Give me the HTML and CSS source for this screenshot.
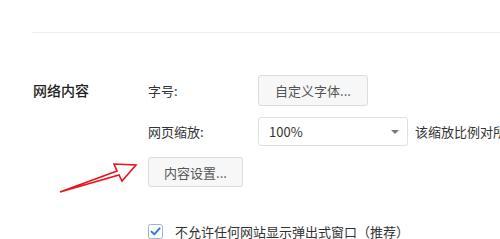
FILE: index.html
```html
<!DOCTYPE html>
<html lang="zh-CN">
<head>
    <meta charset="UTF-8">
    <title>设置</title>
    <link rel="stylesheet" href="styles.css">
</head>
<body>
    <div class="page">
        <div class="divider"></div>

        <!-- 网络内容 -->
        <div class="section">
            <div class="section-title">网络内容</div>
            <div class="settings">
                <div class="row">
                    <span class="row-label">字号:</span>
                    <button class="btn btn-font">自定义字体...</button>
                </div>
                <div class="row">
                    <span class="row-label">网页缩放:</span>
                    <div class="select">
                        <span>100%</span>
                        <span class="caret"></span>
                    </div>
                    <span class="hint">该缩放比例对所有网页生效</span>
                </div>
                <div class="row">
                    <button class="btn btn-content">内容设置...</button>
                </div>
                <label class="check-row">
                    <svg class="checkbox" width="15" height="15" viewBox="0 0 15 15">
                        <rect x="0.5" y="0.5" width="14" height="14" rx="2" fill="#fff" stroke="#9fb4cc"/>
                        <path d="M3.5 7.6 L6.3 10.3 L11.6 4.4" fill="none" stroke="#2f7bd8" stroke-width="2" stroke-linecap="round" stroke-linejoin="round"/>
                    </svg>
                    <span>不允许任何网站显示弹出式窗口（推荐）</span>
                </label>
            </div>
        </div>

        <svg class="arrow" width="90" height="40" viewBox="55 160 90 40">
            <polygon points="60,192 117,171 114,164 136,165 122,181 119,175" fill="none" stroke="#e8141c" stroke-width="1.6" stroke-linejoin="miter"/>
        </svg>
    </div>
</body>
</html>
```

FILE: styles.css
```css
body {
    margin: 0;
    background-color: #fff;
    font-family: "Noto Sans CJK SC", "Liberation Sans", sans-serif;
    font-size: 13px;
    color: #333;
    overflow: hidden;
}
.page {
    position: relative;
    padding: 32px 0 0 32px;
    height: 239px;
    box-sizing: border-box;
    overflow: hidden;
}
.divider {
    height: 1px;
    background-color: #efefef;
}
.section {
    display: flex;
    margin-top: 42px;
}
.section-title {
    flex-shrink: 0;
    width: 115px;
    padding-left: 1px;
    font-size: 14px;
    font-weight: 500;
    color: #222;
    line-height: 31px;
    white-space: nowrap;
}
.settings {
    display: flex;
    flex-direction: column;
    gap: 11px;
    min-width: 0;
}
.row {
    display: flex;
    align-items: center;
    white-space: nowrap;
    min-width: 0;
}
.row-label {
    flex-shrink: 0;
    width: 110px;
    color: #333;
}
.btn {
    flex-shrink: 0;
    height: 31px;
    padding: 0 14px;
    font-family: inherit;
    font-size: 13px;
    color: #555;
    background-color: #f7f7f7;
    border: 1px solid #dcdcdc;
    border-radius: 3px;
}
.btn-font {
    width: 110px;
}
.btn-content {
    width: 95px;
    height: 30px;
    padding: 0;
}
.select {
    flex-shrink: 0;
    display: flex;
    align-items: center;
    justify-content: space-between;
    width: 150px;
    height: 29px;
    padding: 0 8px 0 10px;
    box-sizing: border-box;
    border: 1px solid #e0e0e0;
    border-radius: 3px;
    background-color: #fff;
    color: #333;
}
.caret {
    width: 0;
    height: 0;
    border-left: 4px solid transparent;
    border-right: 4px solid transparent;
    border-top: 4px solid #777;
}
.hint {
    margin-left: 7px;
    min-width: 0;
    overflow: hidden;
    color: #333;
}
.check-row {
    display: flex;
    align-items: center;
    gap: 12px;
    margin-top: 24px;
    white-space: nowrap;
    color: #333;
}
.checkbox {
    display: block;
    flex-shrink: 0;
}
.arrow {
    position: absolute;
    left: 55px;
    top: 160px;
}
```
